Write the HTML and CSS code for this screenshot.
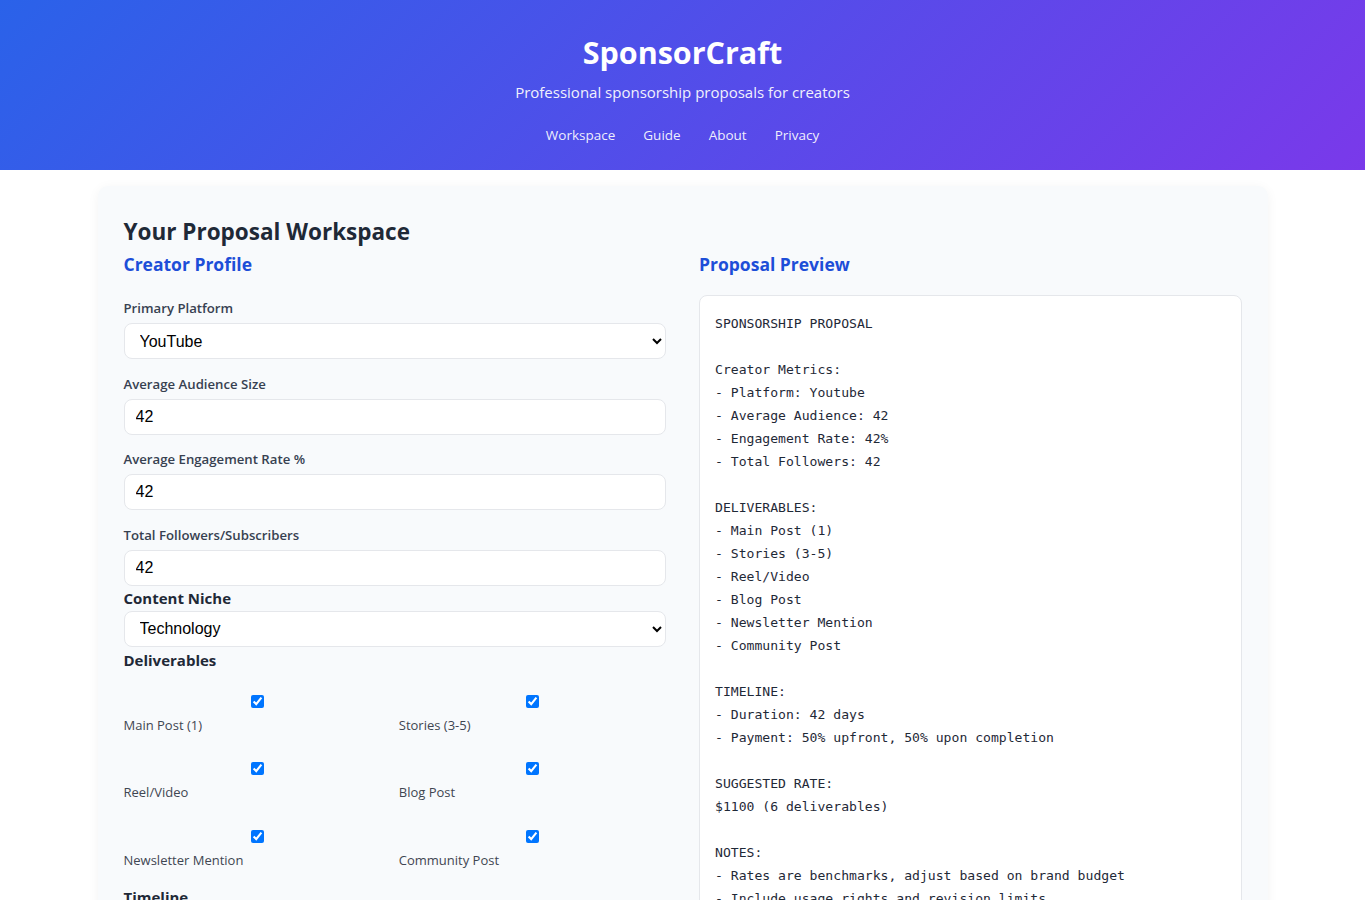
FILE: index.html
```html
<!DOCTYPE html>
<html lang="en">
<head>
    <meta charset="UTF-8">
    <meta name="viewport" content="width=device-width, initial-scale=1.0">
    <title>SponsorCraft - Sponsorship Proposals</title>
    <link rel="stylesheet" href="styles.css">
</head>
<body>
    <header class="site-header">
        <h1>SponsorCraft</h1>
        <p class="tagline">Professional sponsorship proposals for creators</p>
        <nav class="main-nav">
            <a href="#workspace">Workspace</a>
            <a href="#guide">Guide</a>
            <a href="#about">About</a>
            <a href="#privacy">Privacy</a>
        </nav>
    </header>

    <main class="container">
        <section class="card" id="workspace">
            <h2>Your Proposal Workspace</h2>
            <div class="workspace-grid">
                <div class="form-col">
                    <h3>Creator Profile</h3>

                    <div class="form-group">
                        <label for="platform">Primary Platform</label>
                        <select id="platform">
                            <option>YouTube</option>
                            <option>Instagram</option>
                            <option>TikTok</option>
                        </select>
                    </div>

                    <div class="form-group">
                        <label for="audience">Average Audience Size</label>
                        <input type="number" id="audience" value="42">
                    </div>

                    <div class="form-group">
                        <label for="engagement">Average Engagement Rate %</label>
                        <input type="number" id="engagement" value="42">
                    </div>

                    <div class="form-group last">
                        <label for="followers">Total Followers/Subscribers</label>
                        <input type="number" id="followers" value="42">
                    </div>

                    <h4>Content Niche</h4>
                    <select id="niche">
                        <option>Technology</option>
                        <option>Gaming</option>
                        <option>Lifestyle</option>
                    </select>

                    <h4>Deliverables</h4>
                    <div class="check-grid">
                        <label class="check"><input type="checkbox" checked><span>Main Post (1)</span></label>
                        <label class="check"><input type="checkbox" checked><span>Stories (3-5)</span></label>
                        <label class="check"><input type="checkbox" checked><span>Reel/Video</span></label>
                        <label class="check"><input type="checkbox" checked><span>Blog Post</span></label>
                        <label class="check"><input type="checkbox" checked><span>Newsletter Mention</span></label>
                        <label class="check"><input type="checkbox" checked><span>Community Post</span></label>
                    </div>

                    <h4>Timeline</h4>
                    <div class="form-group">
                        <label for="duration">Campaign Duration (days)</label>
                        <input type="number" id="duration" value="42">
                    </div>
                </div>

                <div class="preview-col">
                    <h3>Proposal Preview</h3>
<pre class="preview">SPONSORSHIP PROPOSAL

Creator Metrics:
- Platform: Youtube
- Average Audience: 42
- Engagement Rate: 42%
- Total Followers: 42

DELIVERABLES:
- Main Post (1)
- Stories (3-5)
- Reel/Video
- Blog Post
- Newsletter Mention
- Community Post

TIMELINE:
- Duration: 42 days
- Payment: 50% upfront, 50% upon completion

SUGGESTED RATE:
$1100 (6 deliverables)

NOTES:
- Rates are benchmarks, adjust based on brand budget
- Include usage rights and revision limits</pre>
                </div>
            </div>
        </section>
    </main>
</body>
</html>
```

FILE: styles.css
```css
/* Base */
body {
    margin: 0;
    background-color: #ffffff;
    font-family: "Open Sans", "Noto Sans", sans-serif;
    color: #1f2937;
}

/* Header with gradient */
.site-header {
    background: linear-gradient(135deg, #2a62e9 0%, #7a39ea 100%);
    color: white;
    text-align: center;
    padding: 32px 20px 24px;
    height: 114px;
}

.site-header h1 {
    margin: 0;
    font-size: 30.5px;
    line-height: 40px;
    font-weight: 700;
}

.tagline {
    margin: 8px 0 0;
    font-size: 15px;
    line-height: 24px;
    opacity: 0.92;
}

.main-nav {
    margin-top: 20px;
    display: flex;
    justify-content: center;
    gap: 28px;
}

.main-nav a {
    color: rgba(255, 255, 255, 0.92);
    text-decoration: none;
    font-size: 13.5px;
    line-height: 22px;
}

/* Workspace card */
.container {
    width: 1170px;
    margin: 16px auto 0;
}

.card {
    background-color: #f8fafc;
    border-radius: 10px;
    box-shadow: 0 2px 12px rgba(0, 0, 0, 0.05);
    padding: 30px 26px 40px;
}

.card h2 {
    margin: 0;
    font-size: 22.5px;
    line-height: 32px;
    font-weight: 700;
    color: #1f2937;
}

.workspace-grid {
    display: grid;
    grid-template-columns: 1fr 1fr;
    gap: 33px;
    margin-top: 4px;
}

h3 {
    margin: 0 0 22px;
    font-size: 17.5px;
    line-height: 24px;
    color: #1d4ed8;
}

.preview-col h3 {
    margin-bottom: 19px;
}

h4 {
    margin: 0 0 3px;
    font-size: 15px;
    line-height: 20px;
    font-weight: 700;
    color: #1f2937;
}

/* Form fields */
.form-group {
    margin-bottom: 14.5px;
}

.form-group.last {
    margin-bottom: 2px;
}

.form-group label {
    display: block;
    font-size: 13.2px;
    line-height: 20px;
    font-weight: 600;
    color: #374151;
    margin-bottom: 5px;
}

select,
input[type="number"] {
    display: block;
    width: 100%;
    box-sizing: border-box;
    height: 36px;
    padding: 0 11px;
    font-family: "Liberation Sans", Arial, sans-serif;
    font-size: 16px;
    color: #000000;
    background-color: white;
    border: 1px solid #e5e7eb;
    border-radius: 8px;
}

#niche {
    margin-bottom: 3px;
}

/* Deliverables checkboxes */
.check-grid {
    display: grid;
    grid-template-columns: 1fr 1fr;
    column-gap: 8px;
    row-gap: 27.5px;
    padding-top: 22px;
    margin-bottom: 17px;
}

.check {
    display: flex;
    flex-direction: column;
    font-size: 13px;
    line-height: 20px;
    color: #3f4652;
}

.check input {
    align-self: center;
    width: 13px;
    height: 13px;
    margin: 0 0 7px;
}

/* Preview */
.preview {
    margin: 0;
    background-color: white;
    border: 1px solid #e5e7eb;
    border-radius: 8px;
    padding: 16px 15px 15px;
    font-family: "DejaVu Sans Mono", monospace;
    font-size: 13.1px;
    line-height: 23px;
    color: #1f2937;
    white-space: pre-wrap;
}
```
